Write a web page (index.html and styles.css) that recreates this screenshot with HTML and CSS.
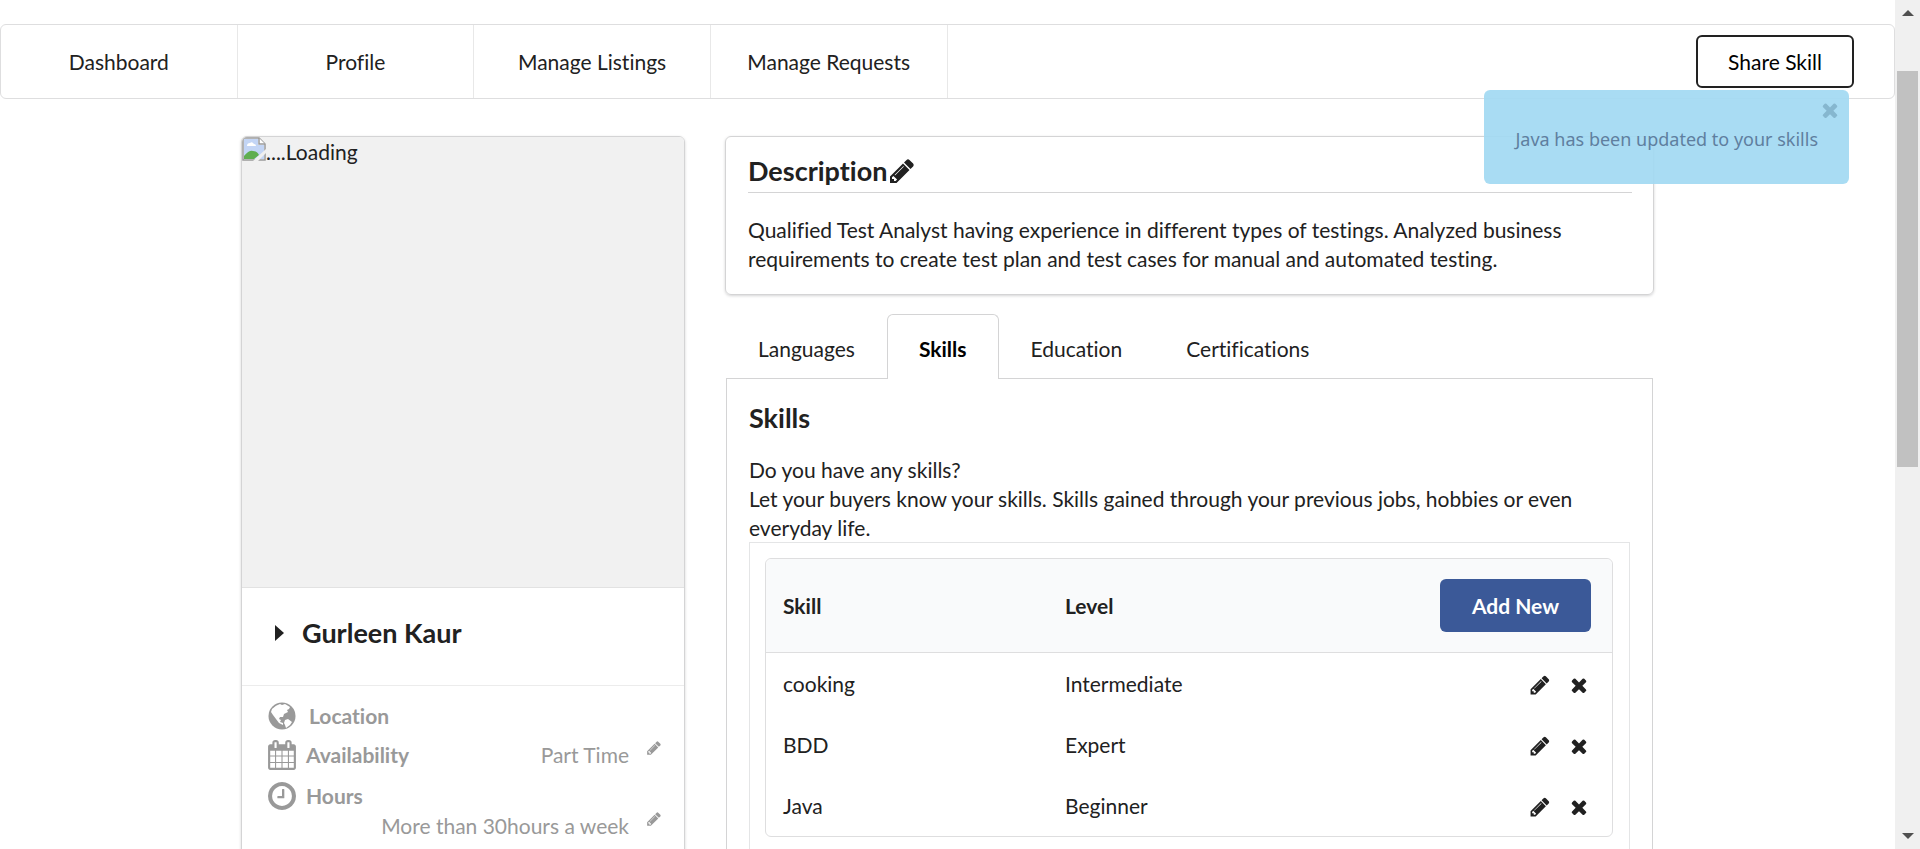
FILE: index.html
```html
<!DOCTYPE html>
<html lang="en">
<head>
<meta charset="utf-8">
<title>Profile</title>
<link rel="stylesheet" href="styles.css">
</head>
<body>
<svg class="defs" aria-hidden="true">
  <symbol id="pencil" viewBox="0 0 1792 1792"><path d="M491 1536l91-91-235-235-91 91v107h128v128h107zm523-928q0-22-22-22-10 0-17 7l-542 542q-7 7-7 17 0 22 22 22 10 0 17-7l542-542q7-7 7-17zm-54-192l416 416-832 832h-416v-416zm683 96q0 53-37 90l-166 166-416-416 166-165q36-38 90-38 53 0 91 38l235 234q37 39 37 91z"/></symbol>
  <symbol id="cross" viewBox="0 0 1792 1792"><path d="M1490 1322q0 40-28 68l-136 136q-28 28-68 28t-68-28l-294-294-294 294q-28 28-68 28t-68-28l-136-136q-28-28-28-68t28-68l294-294-294-294q-28-28-28-68t28-68l136-136q28-28 68-28t68 28l294 294 294-294q28-28 68-28t68 28l136 136q28 28 28 68t-28 68l-294 294 294 294q28 28 28 68z"/></symbol>
</svg>
<div class="window">
  <div class="page">
    <nav class="menu">
      <a class="menu-item" href="#">Dashboard</a>
      <a class="menu-item" href="#">Profile</a>
      <a class="menu-item" href="#">Manage Listings</a>
      <a class="menu-item" href="#">Manage Requests</a>
      <div class="menu-right"><button class="share" type="button">Share Skill</button></div>
    </nav>

    <main class="columns">
      <aside class="card profile">
        <div class="photo">
          <svg class="broken" viewBox="0 0 24 24" aria-hidden="true">
            <path d="M1 1h16l6 6v16H1z" fill="#fff" stroke="#9a9a9a" stroke-width="1.5"/>
            <path d="M2 2h14v6h6v14H2z" fill="#c3d5f5"/>
            <path d="M5 9q0-3 3-3 2-2 4 1 2 0 2 2z" fill="#fff"/>
            <path d="M2 22v-3q5-6 9-5 4 0 6 4l-5 4z" fill="#5fae50"/>
            <path d="M17 1v6h6" fill="#fff" stroke="#9a9a9a" stroke-width="1.5"/>
            <path d="M11 24L24 12v4l-8 8z" fill="#f0f0f0"/>
          </svg><span>....Loading</span>
        </div>
        <div class="name">
          <svg class="caret" viewBox="0 0 9 16" aria-hidden="true"><path d="M0 0l9 8-9 8z"/></svg>
          <h2 class="heading">Gurleen Kaur</h2>
        </div>
        <div class="details">
          <div class="detail">
            <svg class="detail-icon" viewBox="0 0 28 28" aria-hidden="true">
              <circle cx="14" cy="14" r="13.5"/>
              <path class="land" d="M4 7q4-4 8-5l2 1 3-1 5 3-1 2-2 1 1 2-4 2-1 3-3 0-1 2 2 1-1 2 3 1 0 2-4-2-3-4-3-4-2-3zM17 18l3-1 4 3-2 3-4 3-1-3-1-2z"/>
            </svg>
            <strong class="indent">Location</strong>
          </div>
          <div class="detail">
            <svg class="detail-icon large" viewBox="0 0 1792 1792" aria-hidden="true"><path d="M192 1664h288v-288h-288v288zm352 0h320v-288h-320v288zm-352-352h288v-320h-288v320zm352 0h320v-320h-320v320zm-352-384h288v-288h-288v288zm736 736h320v-288h-320v288zm-384-736h320v-288h-320v288zm768 736h288v-288h-288v288zm-384-352h320v-320h-320v320zm-352-864v-288q0-13-9.5-22.5t-22.5-9.5h-64q-13 0-22.5 9.5t-9.5 22.5v288q0 13 9.5 22.5t22.5 9.5h64q13 0 22.5-9.5t9.5-22.5zm736 864h288v-320h-288v320zm-384-384h320v-288h-320v288zm384 0h288v-288h-288v288zm32-480v-288q0-13-9.5-22.5t-22.5-9.5h-64q-13 0-22.5 9.5t-9.5 22.5v288q0 13 9.5 22.5t22.5 9.5h64q13 0 22.5-9.5t9.5-22.5zm384-64v1280q0 52-38 90t-90 38h-1408q-52 0-90-38t-38-90v-1280q0-52 38-90t90-38h128v-96q0-66 47-113t113-47h64q66 0 113 47t47 113v96h384v-96q0-66 47-113t113-47h64q66 0 113 47t47 113v96h128q52 0 90 38t38 90z"/></svg>
            <strong>Availability</strong>
            <span class="value">Part Time <button class="icon-button small" type="button" aria-label="Edit availability"><svg><use href="#pencil"/></svg></button></span>
          </div>
          <div class="detail">
            <svg class="detail-icon" viewBox="128 128 1536 1536" aria-hidden="true"><path d="M1024 544v448q0 14-9 23t-23 9h-320q-14 0-23-9t-9-23v-64q0-14 9-23t23-9h224v-352q0-14 9-23t23-9h64q14 0 23 9t9 23zm416 352q0-148-73-273t-198-198-273-73-273 73-198 198-73 273 73 273 198 198 273 73 273-73 198-198 73-273zm224 0q0 209-103 385.5t-279.5 279.5-385.5 103-385.5-103-279.5-279.5-103-385.5 103-385.5 279.5-279.5 385.5-103 385.5 103 279.5 279.5 103 385.5z"/></svg>
            <strong>Hours</strong>
          </div>
          <div class="detail wrapped">
            <span class="value">More than 30hours a week <button class="icon-button small" type="button" aria-label="Edit hours"><svg><use href="#pencil"/></svg></button></span>
          </div>
          <div class="detail">
            <svg class="detail-icon" viewBox="0 0 28 28" aria-hidden="true"><circle cx="14" cy="16" r="11"/><path d="M12 0h3v5h-3z"/></svg>
          </div>
        </div>
      </aside>

      <div class="main">
        <section class="card description">
          <h2 class="heading ruled">Description<button class="icon-button title" type="button" aria-label="Edit description"><svg><use href="#pencil"/></svg></button></h2>
          <p>Qualified Test Analyst having experience in different types of testings. Analyzed business requirements to create test plan and test cases for manual and automated testing.</p>
        </section>

        <div class="tabs">
          <a class="tab" href="#">Languages</a>
          <a class="tab active" href="#">Skills</a>
          <a class="tab" href="#">Education</a>
          <a class="tab" href="#">Certifications</a>
        </div>
        <section class="panel">
          <h2 class="heading">Skills</h2>
          <p>Do you have any skills?<br>Let your buyers know your skills. Skills gained through your previous jobs, hobbies or even everyday life.</p>
          <div class="frame">
            <table class="skills">
              <thead>
                <tr><th>Skill</th><th>Level</th><th class="actions"><button class="add" type="button">Add New</button></th></tr>
              </thead>
              <tbody>
                <tr><td>cooking</td><td>Intermediate</td><td class="actions"><button class="icon-button" type="button" aria-label="Edit cooking"><svg><use href="#pencil"/></svg></button><button class="icon-button" type="button" aria-label="Remove cooking"><svg><use href="#cross"/></svg></button></td></tr>
                <tr><td>BDD</td><td>Expert</td><td class="actions"><button class="icon-button" type="button" aria-label="Edit BDD"><svg><use href="#pencil"/></svg></button><button class="icon-button" type="button" aria-label="Remove BDD"><svg><use href="#cross"/></svg></button></td></tr>
                <tr><td>Java</td><td>Beginner</td><td class="actions"><button class="icon-button" type="button" aria-label="Edit Java"><svg><use href="#pencil"/></svg></button><button class="icon-button" type="button" aria-label="Remove Java"><svg><use href="#cross"/></svg></button></td></tr>
              </tbody>
            </table>
          </div>
        </section>
      </div>
    </main>
  </div>

  <div class="scrollbar" aria-hidden="true">
    <svg viewBox="0 0 12 6"><path d="M0 6l6-6 6 6z"/></svg>
    <div class="track"><div class="thumb"></div></div>
    <svg viewBox="0 0 12 6"><path d="M0 0l6 6 6-6z"/></svg>
  </div>

  <div class="toast" role="status">
    Java has been updated to your skills
    <button class="icon-button toast-close" type="button" aria-label="Dismiss"><svg><use href="#cross"/></svg></button>
  </div>
</div>
</body>
</html>
```

FILE: styles.css
```css
* { box-sizing: border-box; }

body {
  margin: 0;
  background: #fff;
  color: #212121;
  font: 21px/29px Lato, "Liberation Sans", sans-serif;
  font-variant-ligatures: none;
}

a { color: inherit; text-decoration: none; }
h2, p { margin: 0; }
button { font: inherit; cursor: pointer; }

.defs { position: absolute; width: 0; height: 0; }

.window {
  position: relative;
  display: flex;
  height: 100vh;
  overflow: hidden;
}

.page { flex: 1; min-width: 0; padding-top: 24px; }

/* Top menu */
.menu {
  display: flex;
  height: 75px;
  border: 1px solid #dededf;
  border-radius: 6px;
}
.menu-item {
  display: flex;
  flex: 0 0 12.5%;
  align-items: center;
  justify-content: center;
  border-right: 1px solid #e8e8e8;
}
.menu-right {
  display: flex;
  flex: 1;
  align-items: center;
  justify-content: flex-end;
  padding-right: 40px;
}
.share {
  padding: 10px 30px;
  border: 2px solid #222;
  border-radius: 6px;
  background: #fff;
  color: #000;
}

/* Columns */
.columns {
  display: grid;
  grid-template-columns: 444px 1fr;
  gap: 40px;
  padding: 37px 241px 0;
}
.card {
  border: 1px solid #d4d4d5;
  border-radius: 6px;
  box-shadow: 0 1px 3px #d4d4d5;
}
.heading {
  font-size: 27px;
  line-height: 35px;
  font-weight: 700;
}

/* Profile card */
.profile { overflow: hidden; }
.photo {
  display: flex;
  height: 451px;
  border-bottom: 1px solid #e2e2e2;
  background: #f1f1f1;
}
.broken { width: 24px; height: 24px; }
.name {
  display: flex;
  align-items: center;
  height: 98px;
  gap: 18px;
  padding: 0 33px 8px;
  border-bottom: 1px solid #ececec;
}
.caret { width: 9px; height: 16px; fill: #212121; }
.details {
  padding: 11px 22px 0 25px;
  color: #999;
}
.detail {
  display: flex;
  align-items: center;
  height: 41px;
  gap: 9px;
}
.detail:first-child { height: 37px; }
.detail.wrapped { height: 18px; margin-bottom: 8px; }
.detail-icon { width: 30px; height: 28px; fill: #999; }
.detail-icon.large { height: 32px; }
.land { fill: #fff; }
.indent { padding-left: 3px; }
.value { display: flex; gap: 17px; margin-left: auto; }

/* Icon buttons */
.icon-button {
  display: inline-flex;
  padding: 0;
  border: 0;
  background: none;
  color: inherit;
}
.icon-button svg { width: 22px; height: 22px; fill: currentColor; }
.icon-button.small svg { width: 16px; height: 16px; }
.icon-button.title { margin-left: 1px; vertical-align: -4px; }
.icon-button.title svg { width: 28px; height: 28px; }

/* Description */
.description { padding: 16px 21px 21px 22px; }
.ruled {
  height: 40px;
  margin-bottom: 22px;
  border-bottom: 1px solid #d4d4d5;
}

/* Tabs */
.tabs {
  display: flex;
  margin: 19px 1px 0;
  border-bottom: 1px solid #d4d4d5;
}
.tab {
  height: 65px;
  margin-bottom: -1px;
  padding: 19px 31px 0;
  border: 1px solid transparent;
  border-bottom: 0;
}
.tab.active {
  border-color: #d4d4d5;
  border-radius: 6px 6px 0 0;
  background: #fff;
  color: #000;
  font-weight: 700;
}
.panel {
  margin: 0 1px;
  padding: 21px 22px;
  border: 1px solid #d4d4d5;
  border-top: 0;
}
.panel .heading { margin-bottom: 20px; }
.frame {
  padding: 15px 16px 21px 15px;
  border: 1px solid #e4e5e6;
}

/* Skills table */
.skills {
  width: 100%;
  table-layout: fixed;
  border: 1px solid #dededf;
  border-spacing: 0;
  border-radius: 6px;
}
.skills th,
.skills td { padding: 16px 17px; text-align: left; }
.skills th {
  padding: 20px 17px;
  border-bottom: 1px solid #dededf;
  background: #f9fafb;
}
.skills th:first-child { border-top-left-radius: 6px; }
.skills th:last-child { border-top-right-radius: 6px; }
.skills .actions { padding-right: 21px; text-align: right; }
.skills td.actions { padding-right: 22px; }
.skills td .icon-button { margin-left: 17px; vertical-align: -4px; }
.add {
  padding: 12px 32px;
  border: 0;
  border-radius: 6px;
  background: #3b5998;
  color: #fff;
  font-weight: 700;
}

/* Notification */
.toast {
  position: absolute;
  top: 90px;
  right: 71px;
  padding: 35px 31px 31px;
  border-radius: 6px;
  background: rgba(162, 217, 242, 0.92);
  color: #5f7f9f;
  font: 18px/28px "Noto Sans", "Open Sans", sans-serif;
}
.toast-close {
  position: absolute;
  top: 9px;
  right: 8px;
  color: #86b7cf;
}

/* Scrollbar */
.scrollbar {
  display: flex;
  flex: 0 0 25px;
  flex-direction: column;
  align-items: center;
  padding: 10px 2px;
  background: #f0f0f0;
}
.scrollbar svg { width: 12px; height: 6px; fill: #505050; }
.track { flex: 1; width: 100%; padding: 55px 0; }
.thumb { height: 56%; background: #c1c1c1; }
```
